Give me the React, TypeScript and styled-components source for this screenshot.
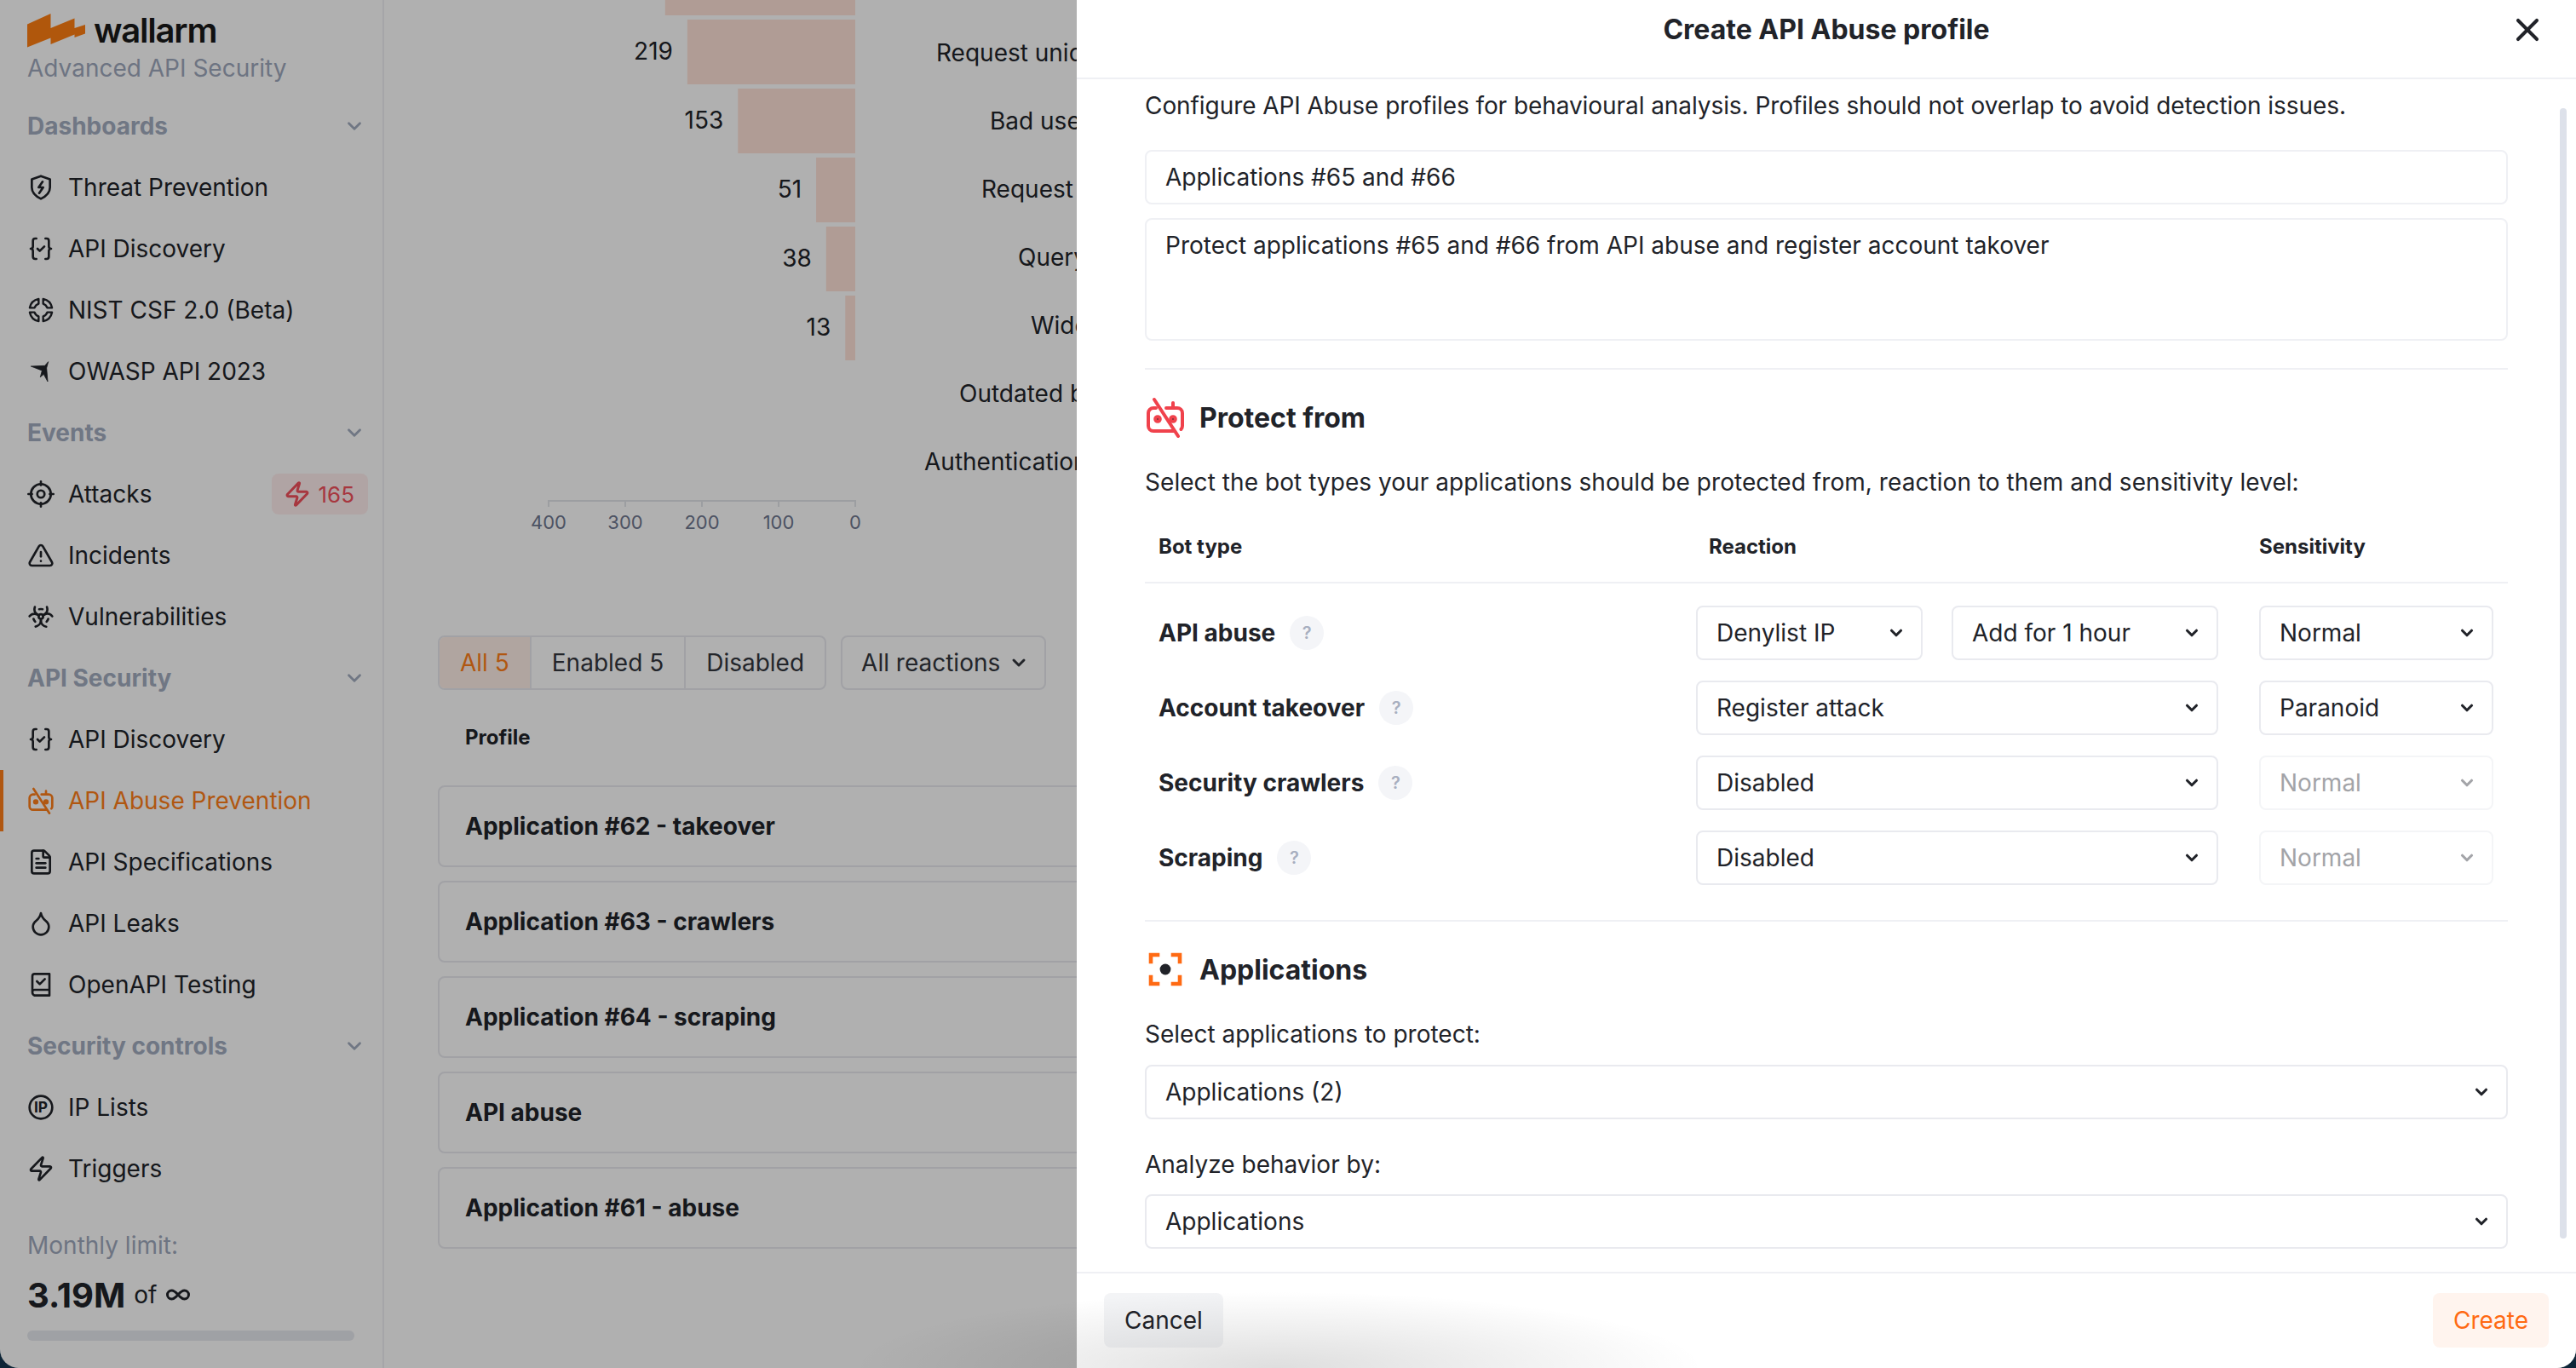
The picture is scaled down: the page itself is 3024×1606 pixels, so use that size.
import React, { FunctionComponent, ReactNode } from 'react'
import styled, { createGlobalStyle } from 'styled-components'
import { Biohazard, ChevronDown, Droplet, FileText, Infinity as InfinityIcon, TriangleAlert, X, Zap } from 'lucide-react'

const GlobalStyle = createGlobalStyle`
    html, body {
        margin: 0;
        padding: 0;
        background: #0d2537;
        overflow: hidden;
    }
    * {
        box-sizing: border-box;
    }
    body, input, textarea, button {
        font-family: Inter, "Noto Sans", sans-serif;
        font-size: 28px;
        color: #212329;
    }
`

const Screen = styled.div`
    position: relative;
    display: flex;
    width: 3024px;
    height: 1606px;
    background: #fff;
    border-radius: 0 0 22px 22px;
    overflow: hidden;
`

const Sidebar = styled.aside`
    flex: 0 0 451px;
    display: flex;
    flex-direction: column;
    border-right: 2px solid #eff0f4;
`

const Logo = styled.div`
    display: flex;
    align-items: center;
    gap: 10px;
    height: 40px;
    margin: 16px 0 0 32px;
    svg {
        flex: none;
    }
`

const LogoWord = styled.span`
    font-size: 40px;
    font-weight: 600;
    letter-spacing: -1.2px;
    color: #1a1a1a;
    line-height: 40px;
`

const Tagline = styled.div`
    margin: 4px 0 12px 32px;
    line-height: 40px;
    color: #9fa9bd;
`

const GroupHead = styled.div`
    display: flex;
    align-items: center;
    justify-content: space-between;
    height: 72px;
    padding: 0 20px 0 32px;
    font-weight: 700;
    color: #a3adbf;
`

const NavItem = styled.div<{ $active?: boolean }>`
    display: flex;
    align-items: center;
    gap: 16px;
    height: 72px;
    padding: 0 17px 0 32px;
    color: ${p => (p.$active ? '#ff7f1a' : '#212329')};
    box-shadow: ${p => (p.$active ? 'inset 4px 0 0 #ff7f1a' : 'none')};
`

const NavLabel = styled.span`
    flex: 1;
`

const Badge = styled.span`
    display: flex;
    align-items: center;
    gap: 8px;
    height: 48px;
    padding: 0 16px 0 14px;
    border-radius: 8px;
    background: #ffeeee;
    color: #f2505c;
    font-size: 26px;
`

const Limit = styled.div`
    margin: 34px 0 0 32px;
    line-height: 40px;
    color: #9fa9bd;
`

const LimitValue = styled.div`
    display: flex;
    align-items: center;
    gap: 10px;
    height: 48px;
    margin: 14px 0 0 32px;
    strong {
        font-size: 40px;
        font-weight: 700;
    }
`

const LimitBar = styled.div`
    height: 12px;
    margin: 18px 33px 0 32px;
    border-radius: 6px;
    background: #e7e9ef;
`

const Main = styled.main`
    flex: 1;
    min-width: 0;
    overflow: hidden;
`

const Chart = styled.svg`
    display: block;
    font-size: 28px;
    fill: #212329;
`

const Filters = styled.div`
    display: flex;
    gap: 17px;
    margin: 46px 0 0 63px;
`

const Segments = styled.div`
    display: flex;
    height: 64px;
    border: 2px solid #e9eaef;
    border-radius: 8px;
    overflow: hidden;
`

const Segment = styled.div<{ $active?: boolean }>`
    display: flex;
    align-items: center;
    padding: 0 24px;
    background: ${p => (p.$active ? '#fff0e8' : 'transparent')};
    color: ${p => (p.$active ? '#ff7f1a' : '#33363d')};
    & + & {
        border-left: 2px solid #e9eaef;
    }
`

const FilterSelect = styled.div`
    display: flex;
    align-items: center;
    gap: 10px;
    height: 64px;
    padding: 0 18px 0 22px;
    border: 2px solid #e9eaef;
    border-radius: 8px;
    color: #33363d;
`

const ProfileHead = styled.div`
    margin: 36px 0 0 95px;
    line-height: 40px;
    font-size: 24px;
    font-weight: 700;
`

const ProfileList = styled.div`
    display: flex;
    flex-direction: column;
    gap: 16px;
    width: 2400px;
    margin: 36px 0 0 63px;
`

const ProfileCard = styled.div`
    display: flex;
    align-items: center;
    height: 96px;
    padding-left: 30px;
    border: 2px solid #e9eaef;
    border-radius: 8px;
    font-weight: 700;
`

const Overlay = styled.div`
    position: absolute;
    inset: 0;
    background: rgba(0, 0, 0, 0.31);
`

const Modal = styled.section`
    position: absolute;
    top: 0;
    right: 0;
    bottom: 0;
    width: 1760px;
    display: flex;
    flex-direction: column;
    background: #fff;
`

const ModalHeader = styled.header`
    position: relative;
    flex: 0 0 93px;
    display: flex;
    justify-content: center;
    padding-top: 15px;
    border-bottom: 2px solid #eff0f4;
    font-size: 32px;
    font-weight: 700;
    line-height: 40px;
`

const CloseButton = styled.span`
    position: absolute;
    top: 13px;
    right: 35px;
    display: flex;
`

const ModalBody = styled.div`
    flex: 1;
    min-height: 0;
    padding: 0 80px;
    overflow: hidden;
`

const Scrollbar = styled.div`
    position: absolute;
    top: 127px;
    right: 11px;
    width: 8px;
    height: 1327px;
    border-radius: 4px;
    background: #dde1ea;
`

const Paragraph = styled.p<{ $top: number; $tracking?: number }>`
    margin: ${p => p.$top}px 0 0;
    line-height: 40px;
    letter-spacing: ${p => p.$tracking ?? 0}px;
`

const TextField = styled.input`
    display: block;
    width: 100%;
    height: 64px;
    margin-top: 32px;
    padding: 0 22px;
    border: 2px solid #eff0f4;
    border-radius: 8px;
    outline: none;
`

const TextArea = styled.textarea`
    display: block;
    width: 100%;
    height: 144px;
    margin-top: 16px;
    padding: 10px 22px;
    border: 2px solid #eff0f4;
    border-radius: 8px;
    line-height: 40px;
    outline: none;
    resize: none;
`

const Divider = styled.hr<{ $top: number }>`
    height: 2px;
    margin: ${p => p.$top}px 0 0;
    border: none;
    background: #eff0f4;
`

const SectionTitle = styled.h2`
    display: flex;
    align-items: center;
    gap: 16px;
    height: 48px;
    margin: 32px 0 0;
    font-size: 32px;
    font-weight: 700;
`

const BotHeader = styled.div`
    display: grid;
    grid-template-columns: 583px 613px 275px;
    column-gap: 48px;
    margin-top: 36px;
    padding: 0 17px 21px 16px;
    border-bottom: 2px solid #eff0f4;
    font-size: 24px;
    font-weight: 700;
    line-height: 40px;
`

const ReactionHead = styled.span`
    padding-left: 15px;
`

const BotRows = styled.div`
    display: flex;
    flex-direction: column;
    gap: 24px;
    margin-top: 26px;
`

const BotRow = styled.div`
    display: grid;
    grid-template-columns: 583px 613px 275px;
    column-gap: 48px;
    align-items: center;
    padding: 0 17px 0 16px;
`

const BotName = styled.div`
    display: flex;
    align-items: center;
    gap: 17px;
    font-weight: 700;
`

const Help = styled.span`
    display: flex;
    align-items: center;
    justify-content: center;
    width: 40px;
    height: 40px;
    border-radius: 50%;
    background: #f4f5f8;
    color: #a8afc0;
    font-size: 20px;
    font-weight: 600;
`

const ReactionCell = styled.div`
    display: flex;
    gap: 34px;
`

const SelectBox = styled.div<{ $disabled?: boolean; $width?: number; $top?: number }>`
    display: flex;
    align-items: center;
    justify-content: space-between;
    flex: ${p => (p.$width ? `0 0 ${p.$width}px` : '1')};
    height: 64px;
    margin-top: ${p => p.$top ?? 0}px;
    padding: 0 18px 0 22px;
    border: 2px solid ${p => (p.$disabled ? '#f4f5f7' : '#e9eaef')};
    border-radius: 8px;
    color: ${p => (p.$disabled ? '#a3a4a8' : '#212329')};
`

const ModalFooter = styled.footer`
    flex: 0 0 113px;
    display: flex;
    align-items: flex-start;
    justify-content: space-between;
    padding: 23px 32px 0;
    border-top: 2px solid #eff0f4;
`

const FooterButton = styled.button<{ $primary?: boolean }>`
    height: 64px;
    padding: 0 24px;
    border: none;
    border-radius: 8px;
    background: ${p => (p.$primary ? '#fff4ee' : '#f3f4f6')};
    color: ${p => (p.$primary ? '#ff6a13' : '#212329')};
`

const BottomShade = styled.div`
    position: absolute;
    left: 1000px;
    bottom: 0;
    width: 1000px;
    height: 90px;
    background: radial-gradient(ellipse 500px 90px at 50% 100%, rgba(0, 0, 0, 0.13), rgba(0, 0, 0, 0));
    pointer-events: none;
`

type IconProps = { size?: number, color?: string }

const Glyph: FunctionComponent<IconProps & { children: ReactNode }> = ({ size = 32, color = 'currentColor', children }) => (
    <svg width={size} height={size} viewBox="0 0 24 24" fill="none" stroke={color} strokeWidth={2} strokeLinecap="round" strokeLinejoin="round" style={{ flex: 'none' }}>
        {children}
    </svg>
)

const ShieldBolt = (p: IconProps) => (
    <Glyph {...p}>
        <path d="M12 2l8 2.800v7.200c0 4.600-3.400 7.800-8 10-4.600-2.200-8-5.400-8-10V4.800z" />
        <path d="M13.500 7l-3.500 5h4l-3.500 5" />
    </Glyph>
)

const BracesCheck = (p: IconProps) => (
    <Glyph {...p}>
        <path d="M8 3H7a2 2 0 0 0-2 2v5a2 2 0 0 1-2 2 2 2 0 0 1 2 2v5c0 1.100.9 2 2 2h1" />
        <path d="M16 21h1a2 2 0 0 0 2-2v-5c0-1.100.9-2 2-2a2 2 0 0 1-2-2V5a2 2 0 0 0-2-2h-1" />
        <path d="M9 12l2 2 4-4" />
    </Glyph>
)

const Petals = (p: IconProps) => (
    <Glyph {...p}>
        {[0, 90, 180, 270].map(a => (
            <path key={a} transform={`rotate(${a} 12 12)`} strokeWidth={1.8} d="M10 2.200A10 10 0 0 0 2.200 10H6.400A5.800 5.800 0 0 1 10 6.400z" />
        ))}
    </Glyph>
)

const Wasp = (p: IconProps) => (
    <Glyph {...p}>
        <path d="M3.500 7.500l12-.5 3-3.500-1.500 5.500 1 12-3.500-6.500-3 2.500 1.500-5.500z" fill="currentColor" strokeWidth={0.6} />
    </Glyph>
)

const Target = (p: IconProps) => (
    <Glyph {...p}>
        <circle cx="12" cy="12" r="8.800" />
        <circle cx="12" cy="12" r="3.200" />
        <path d="M12 1v3.200M12 19.800V23M1 12h3.200M19.800 12H23" />
    </Glyph>
)

const BotOff = (p: IconProps) => (
    <Glyph {...p}>
        <path d="M6.500 6.500H5a3 3 0 0 0-3 3V17a3 3 0 0 0 3 3h12M12.500 6.500H19a3 3 0 0 1 3 3V17c0 .8-.3 1.500-.8 2" />
        <path d="M16.500 6.500V3.500" />
        <path d="M5.500 1.500l14 21.500" />
        <circle cx="7.500" cy="13" r="1.400" fill="currentColor" />
        <circle cx="16.500" cy="13" r="1.400" fill="currentColor" />
    </Glyph>
)

const BookCheck = (p: IconProps) => (
    <Glyph {...p}>
        <path d="M4.500 18.500V4.500a2 2 0 0 1 2-2h13v19h-13a3 3 0 0 1-2-3zM4.500 18a2 2 0 0 1 2-1.500h13" />
        <path d="M8.500 9l2.500 2.500 4.500-4.500" />
    </Glyph>
)

const IpCircle = (p: IconProps) => (
    <Glyph {...p}>
        <circle cx="12" cy="12" r="10" />
        <text x="12" y="16.600" textAnchor="middle" fontSize="13" fontWeight="700" fill="currentColor" stroke="none" fontFamily="Inter, sans-serif">IP</text>
    </Glyph>
)

const Corners = (p: IconProps) => (
    <Glyph {...p} size={48}>
        <path d="M7.500 3.500h-4v4M16.500 3.500h4v4M7.500 20.500h-4v-4M16.500 20.500h4v-4" strokeWidth={2.300} strokeLinecap="square" strokeLinejoin="miter" />
        <circle cx="12" cy="12" r="3.200" fill="currentColor" stroke="none" />
    </Glyph>
)

const Caret = () => <ChevronDown size={22} strokeWidth={3.4} style={{ flex: 'none' }} />

type SelectProps = { value: string, disabled?: boolean, width?: number, top?: number }

const Select: FunctionComponent<SelectProps> = ({ value, disabled, width, top }) => (
    <SelectBox $disabled={disabled} $width={width} $top={top}>
        {value}
        <Caret />
    </SelectBox>
)

const nav = [
    { head: 'Dashboards', items: [
        { label: 'Threat Prevention', icon: <ShieldBolt /> },
        { label: 'API Discovery', icon: <BracesCheck /> },
        { label: 'NIST CSF 2.0 (Beta)', icon: <Petals /> },
        { label: 'OWASP API 2023', icon: <Wasp /> },
    ] },
    { head: 'Events', items: [
        { label: 'Attacks', icon: <Target />, badge: '165' },
        { label: 'Incidents', icon: <TriangleAlert size={32} strokeWidth={2} /> },
        { label: 'Vulnerabilities', icon: <Biohazard size={32} strokeWidth={2} /> },
    ] },
    { head: 'API Security', items: [
        { label: 'API Discovery', icon: <BracesCheck /> },
        { label: 'API Abuse Prevention', icon: <BotOff />, active: true },
        { label: 'API Specifications', icon: <FileText size={32} strokeWidth={2} /> },
        { label: 'API Leaks', icon: <Droplet size={32} strokeWidth={2} /> },
        { label: 'OpenAPI Testing', icon: <BookCheck /> },
    ] },
    { head: 'Security controls', items: [
        { label: 'IP Lists', icon: <IpCircle /> },
        { label: 'Triggers', icon: <Zap size={32} strokeWidth={2} /> },
    ] },
]

const bars = [
    { value: 248, y: -58 },
    { value: 219, y: 23 },
    { value: 153, y: 104 },
    { value: 51, y: 185 },
    { value: 38, y: 266 },
    { value: 13, y: 347 },
]

const chartLabels = [
    { text: 'Request uniqueness', x: 1099 },
    { text: 'Bad user agent', x: 1162 },
    { text: 'Request rate', x: 1152 },
    { text: 'Query abuse', x: 1195 },
    { text: 'Wide scope', x: 1210 },
    { text: 'Outdated browsers', x: 1126 },
    { text: 'Authentication abuse', x: 1085 },
]

const AbuseChart = () => (
    <Chart width={1400} height={700} viewBox="451 0 1400 700">
        {bars.map(b => (
            <g key={b.value}>
                <rect x={1004 - b.value * 0.9} y={b.y} width={b.value * 0.9} height={76} fill="#ffe2d8" />
                {b.y > 0 && <text x={1004 - b.value * 0.9 - 17} y={b.y + 37} textAnchor="end" dominantBaseline="central">{b.value}</text>}
            </g>
        ))}
        {chartLabels.map((l, i) => (
            <text key={l.text} x={l.x} y={62 + i * 80} dominantBaseline="central">{l.text}</text>
        ))}
        <path d="M644 595v-7h360v7M734 588v7M824 588v7M914 588v7" fill="none" stroke="#e3e5ea" strokeWidth={2} />
        {[400, 300, 200, 100, 0].map(t => (
            <text key={t} x={1004 - t * 0.9} y={613} textAnchor="middle" dominantBaseline="central" fontSize={22} fill="#6f7890">{t}</text>
        ))}
    </Chart>
)

const profiles = ['Application #62 - takeover', 'Application #63 - crawlers', 'Application #64 - scraping', 'API abuse', 'Application #61 - abuse']

const App = () => (
    <Screen>
        <GlobalStyle />
        <Sidebar>
            <Logo>
                <svg width={68} height={40} viewBox="0 0 68 40">
                    <path d="M0 12.500L27.500 0V17L55.500 5.500V17L68 13V23.500L55.500 28V24.500L27.500 36V28.500L0 39.500Z" fill="#ff7f12" />
                </svg>
                <LogoWord>wallarm</LogoWord>
            </Logo>
            <Tagline>Advanced API Security</Tagline>
            {nav.map(group => (
                <React.Fragment key={group.head}>
                    <GroupHead>
                        {group.head}
                        <ChevronDown size={26} strokeWidth={2.6} />
                    </GroupHead>
                    {group.items.map(item => (
                        <NavItem key={item.label + group.head} $active={item.active}>
                            {item.icon}
                            <NavLabel>{item.label}</NavLabel>
                            {item.badge && (
                                <Badge>
                                    <Zap size={32} strokeWidth={2.2} />
                                    {item.badge}
                                </Badge>
                            )}
                        </NavItem>
                    ))}
                </React.Fragment>
            ))}
            <Limit>Monthly limit:</Limit>
            <LimitValue>
                <strong>3.19M</strong>
                of
                <InfinityIcon size={30} strokeWidth={2.4} />
            </LimitValue>
            <LimitBar />
        </Sidebar>
        <Main>
            <AbuseChart />
            <Filters>
                <Segments>
                    <Segment $active>All 5</Segment>
                    <Segment>Enabled 5</Segment>
                    <Segment>Disabled</Segment>
                </Segments>
                <FilterSelect>
                    All reactions
                    <ChevronDown size={24} strokeWidth={3} />
                </FilterSelect>
            </Filters>
            <ProfileHead>Profile</ProfileHead>
            <ProfileList>
                {profiles.map(name => <ProfileCard key={name}>{name}</ProfileCard>)}
            </ProfileList>
        </Main>
        <Overlay />
        <Modal>
            <ModalHeader>
                Create API Abuse profile
                <CloseButton><X size={44} strokeWidth={2.2} /></CloseButton>
            </ModalHeader>
            <ModalBody>
                <Paragraph $top={11} $tracking={-0.07}>Configure API Abuse profiles for behavioural analysis. Profiles should not overlap to avoid detection issues.</Paragraph>
                <TextField defaultValue="Applications #65 and #66" />
                <TextArea defaultValue="Protect applications #65 and #66 from API abuse and register account takover" />
                <Divider $top={32} />
                <SectionTitle>
                    <BotOff size={48} color="#f0424c" />
                    Protect from
                </SectionTitle>
                <Paragraph $top={32} $tracking={0.055}>Select the bot types your applications should be protected from, reaction to them and sensitivity level:</Paragraph>
                <BotHeader>
                    <span>Bot type</span>
                    <ReactionHead>Reaction</ReactionHead>
                    <span>Sensitivity</span>
                </BotHeader>
                <BotRows>
                    <BotRow>
                        <BotName>API abuse<Help>?</Help></BotName>
                        <ReactionCell>
                            <Select value="Denylist IP" width={266} />
                            <Select value="Add for 1 hour" />
                        </ReactionCell>
                        <Select value="Normal" />
                    </BotRow>
                    <BotRow>
                        <BotName>Account takeover<Help>?</Help></BotName>
                        <Select value="Register attack" />
                        <Select value="Paranoid" />
                    </BotRow>
                    <BotRow>
                        <BotName>Security crawlers<Help>?</Help></BotName>
                        <Select value="Disabled" />
                        <Select value="Normal" disabled />
                    </BotRow>
                    <BotRow>
                        <BotName>Scraping<Help>?</Help></BotName>
                        <Select value="Disabled" />
                        <Select value="Normal" disabled />
                    </BotRow>
                </BotRows>
                <Divider $top={41} />
                <SectionTitle>
                    <Corners color="#ff6a13" />
                    Applications
                </SectionTitle>
                <Paragraph $top={32}>Select applications to protect:</Paragraph>
                <Select value="Applications (2)" top={16} />
                <Paragraph $top={33}>Analyze behavior by:</Paragraph>
                <Select value="Applications" top={15} />
            </ModalBody>
            <ModalFooter>
                <FooterButton>Cancel</FooterButton>
                <FooterButton $primary>Create</FooterButton>
            </ModalFooter>
            <Scrollbar />
        </Modal>
        <BottomShade />
    </Screen>
)

export default App
